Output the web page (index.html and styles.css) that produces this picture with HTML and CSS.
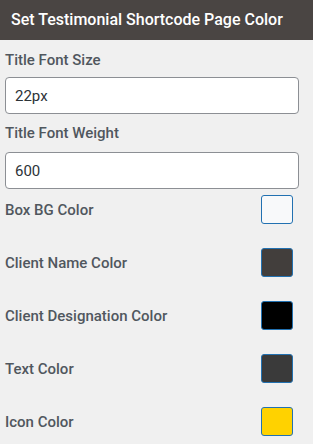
FILE: index.html
```html
<!DOCTYPE html>
<html lang="en">
<head>
<meta charset="UTF-8">
<meta name="viewport" content="width=device-width,initial-scale=1">
<title>Testimonial Shortcode Page Color</title>
<link rel="stylesheet" href="styles.css">
</head>
<body>
<div class="panel">
  <h3 class="panel-title">Set Testimonial Shortcode Page Color</h3>

  <div class="panel-body">
    <label class="field-label" for="titleSize">Title Font Size</label>
    <input class="field-input" id="titleSize" type="text" value="22px">

    <label class="field-label" for="titleWeight">Title Font Weight</label>
    <input class="field-input" id="titleWeight" type="text" value="600">

    <div class="colors">
      <div class="color-row">
        <span class="field-label">Box BG Color</span>
        <span class="swatch" style="background:#f8f9fa"></span>
      </div>
      <div class="color-row">
        <span class="field-label">Client Name Color</span>
        <span class="swatch" style="background:#423e3c"></span>
      </div>
      <div class="color-row">
        <span class="field-label">Client Designation Color</span>
        <span class="swatch" style="background:#000000"></span>
      </div>
      <div class="color-row">
        <span class="field-label">Text Color</span>
        <span class="swatch" style="background:#3a3a3a"></span>
      </div>
      <div class="color-row">
        <span class="field-label">Icon Color</span>
        <span class="swatch" style="background:#ffd200"></span>
      </div>
    </div>
  </div>
</div>
</body>
</html>
```
FILE: styles.css
```css
:root{
  --bg:#f0f0f0;--head:#4a4543;--txt:#50575e;--line:#8c8f94;--blue:#2271b1}
body{margin:0;background:var(--bg);font-family:Roboto,"Liberation Sans",Arial,sans-serif;color:var(--txt)}
.panel{width:313px}
.panel-title{
  margin:0;height:40px;line-height:40px;padding:0 11px;background:var(--head);
  color:#fff;font-size:16px;font-weight:500;white-space:nowrap}
.panel-body{padding:10px 14px 0 5px}
.field-label{display:block;font-size:15px;font-weight:500;line-height:20px;margin:9px 0 7px}
.panel-body > .field-label:first-child{margin-top:0}
.field-input{
  display:block;box-sizing:border-box;width:100%;height:37px;margin:0;padding:0 9px;
  border:1px solid var(--line);border-radius:4px;background:#fff;
  font-family:inherit;font-size:15px;color:#2c3338}
.field-input + .field-label{margin-bottom:9px}
.colors{display:flex;flex-direction:column;gap:24px;margin-top:6px;padding-right:6px}
.color-row{display:flex;justify-content:space-between;align-items:center}
.color-row .field-label{margin:0}
.swatch{display:block;box-sizing:border-box;width:32px;height:29px;border:1px solid var(--blue);border-radius:3px}
```
